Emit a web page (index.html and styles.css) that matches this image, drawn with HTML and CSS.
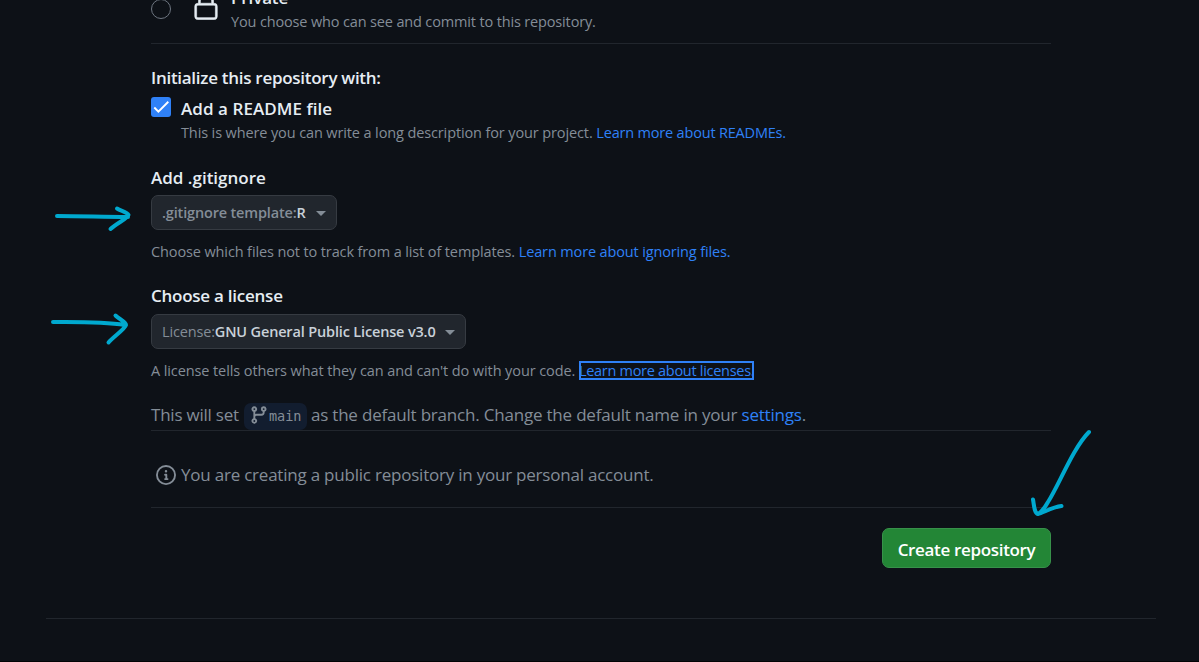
FILE: index.html
```html
<!DOCTYPE html>
<html lang="en">
<head>
<meta charset="utf-8">
<title>Create a new repository</title>
<link rel="stylesheet" href="styles.css">
</head>
<body>
<main class="page">
  <form class="form">
    <div class="visibility">
      <span class="radio"></span>
      <svg class="lock" width="30" height="30" viewBox="0 0 24 24" fill="#e6edf3" stroke="#e6edf3" stroke-width=".5"><path d="M6 9V7.250C6 3.845 8.503 1 12 1s6 2.845 6 6.250V9h.5a2.500 2.500 0 0 1 2.500 2.500v8a2.500 2.500 0 0 1-2.500 2.500h-13A2.500 2.500 0 0 1 3 19.500v-8A2.500 2.500 0 0 1 5.500 9Zm-1.500 2.500v8a1 1 0 0 0 1 1h13a1 1 0 0 0 1-1v-8a1 1 0 0 0-1-1h-13a1 1 0 0 0-1 1Zm3-4.250V9h9V7.250c0-2.670-1.922-4.750-4.500-4.750-2.578 0-4.500 2.080-4.500 4.750Z"/></svg>
      <div class="visibility-text">
        <div class="title"><span class="t-private">Private</span></div>
        <div class="note"><span class="n-private">You choose who can see and commit to this repository.</span></div>
      </div>
    </div>

    <h2 class="title init"><span class="t-init">Initialize this repository with:</span></h2>
    <div class="readme">
      <span class="checkbox"><svg width="20" height="20" viewBox="0 0 20 20" fill="none" stroke="#fff" stroke-width="1.900"><path d="M3.300 10.500 7.400 14.600 17.300 4.800"/></svg></span>
      <div>
        <div class="title"><span class="t-readme">Add a README file</span></div>
        <div class="note readme-note"><span class="n-readme">This is where you can write a long description for your project.</span> <a class="l-readme">Learn more about READMEs.</a></div>
      </div>
    </div>

    <h2 class="title section"><span class="t-ignore">Add .gitignore</span></h2>
    <div class="select select-ignore"><span class="select-label">.gitignore template:</span><span class="select-value">R</span><i class="caret"></i></div>
    <div class="note select-note"><span class="n-ignore">Choose which files not to track from a list of templates.</span> <a class="l-ignore">Learn more about ignoring files.</a></div>

    <h2 class="title section-license"><span class="t-license">Choose a license</span></h2>
    <div class="select select-license"><span class="select-plain">License:</span><span class="select-value">GNU General Public License v3.0</span><i class="caret"></i></div>
    <div class="note select-note"><span class="n-license">A license tells others what they can and can't do with your code.</span> <a class="l-license focused">Learn more about licenses.</a></div>

    <div class="branch-line">
      <span class="p-set">This will set</span>
      <span class="branch"><svg width="20" height="20" viewBox="0 0 16 16" fill="#848d97"><path d="M9.500 3.250a2.250 2.250 0 1 1 3 2.122V6A2.500 2.500 0 0 1 10 8.500H6a1 1 0 0 0-1 1v1.128a2.251 2.251 0 1 1-1.500 0V5.372a2.250 2.250 0 1 1 1.500 0v1.836A2.493 2.493 0 0 1 6 7h4a1 1 0 0 0 1-1v-.628A2.250 2.250 0 0 1 9.500 3.250Zm-6 0a.750.750 0 1 0 1.500 0 .750.750 0 0 0-1.500 0Zm8.250-.750a.750.750 0 1 0 0 1.500.750.750 0 0 0 0-1.500ZM4.250 12a.750.750 0 1 0 0 1.500.750.750 0 0 0 0-1.500Z"/></svg><code>main</code></span>
      <span class="p-default">as the default branch. Change the default name in your <a>settings</a>.</span>
    </div>
    <div class="info">
      <svg width="20" height="20" viewBox="0 0 16 16" fill="#848d97"><path d="M0 8a8 8 0 1 1 16 0A8 8 0 0 1 0 8Zm8-6.500a6.500 6.500 0 1 0 0 13 6.500 6.500 0 0 0 0-13ZM6.500 7.750A.750.750 0 0 1 7.250 7h1a.750.750 0 0 1 .750.750v2.750h.250a.750.750 0 0 1 0 1.500h-2a.750.750 0 0 1 0-1.500h.250v-2h-.250a.750.750 0 0 1-.750-.750ZM8 6a1 1 0 1 1 0-2 1 1 0 0 1 0 2Z"/></svg>
      <span class="p-info">You are creating a public repository in your personal account.</span>
    </div>
    <div class="actions"><button type="button" class="create"><span class="t-create">Create repository</span></button></div>
  </form>
  <footer class="footer"></footer>
  <svg class="marks" width="1199" height="662" viewBox="0 0 1199 662" fill="none" stroke="#00a9cf" stroke-width="4" stroke-linecap="round" stroke-linejoin="round">
    <path d="M57 216C82 216 104 217 128 217M117 208.500C121 211 127 212 128.500 215C128.500 218 117 223 110.500 229"/>
    <path d="M53 322C82 322 103 321.500 125 325M115.500 315.500C119 319 126 322 126 325C125 329 113 337 108.500 342.500"/>
    <path d="M1089 432C1073 448 1059 485 1048 502Q1043 511 1038 514M1033 499.500C1034 504 1034 513 1038 514C1043 513 1052 507 1061.500 506"/>
  </svg>
</main>
</body>
</html>
```
FILE: styles.css
```css
* { box-sizing: border-box; }
body {
  margin: 0;
  background: #0d1117;
  color: #e6edf3;
  font-family: "Open Sans", "Noto Sans", sans-serif;
}
.page {
  position: relative;
  height: 662px;
  overflow: hidden;
  border-bottom: 1px solid #020305;
}
.form { width: 900px; margin-left: 151px; }
a { color: #2f81f7; }
.title { margin: 0; font-size: 17px; line-height: 24px; font-weight: 600; white-space: nowrap; }
.note { font-size: 14.5px; line-height: 20px; color: #848d97; white-space: nowrap; }

.t-private { letter-spacing: -0.12px; }
.t-init { letter-spacing: -0.28px; }
.t-readme { letter-spacing: 0.06px; }
.t-license { letter-spacing: -0.25px; }
.t-create { letter-spacing: -0.33px; }
.n-private { letter-spacing: -0.15px; }
.n-readme { letter-spacing: -0.12px; }
.l-readme { letter-spacing: -0.19px; }
.n-ignore { letter-spacing: -0.12px; }
.l-ignore { letter-spacing: -0.14px; }
.n-license { letter-spacing: -0.1px; }
.l-license { letter-spacing: -0.29px; }
.p-set { letter-spacing: -0.22px; }
.p-default { letter-spacing: -0.2px; }
.p-info { letter-spacing: -0.22px; }

.visibility {
  display: flex;
  height: 60px;
  margin-top: -16px;
  border-bottom: 1px solid #21262d;
}
.radio { width: 20px; height: 20px; margin-top: 15px; border: 1px solid #6e7681; border-radius: 50%; }
.lock { margin: 8px 10px 0 20px; }
.visibility-text { padding-top: 2px; }
.visibility-text .note { margin-top: 2px; }

.init { margin-top: 22px; }
.readme { display: flex; gap: 10px; margin-top: 7px; }
.checkbox { width: 20px; height: 20px; border-radius: 3px; background: #2f81f7; }
.checkbox svg { display: block; }
.readme-note { margin-top: 2px; }
.section { margin-top: 23px; }
.section-license { margin-top: 22px; }

.select {
  display: flex;
  align-items: center;
  height: 35px;
  padding: 0 10px;
  border: 1px solid #363b42;
  border-radius: 7px;
  background: #21262d;
  font-size: 14.5px;
  white-space: nowrap;
}
.select-ignore { width: 186px; margin-top: 5px; }
.select-license { width: 315px; margin-top: 6px; }
.select-label { color: #848d97; font-weight: 600; letter-spacing: -0.16px; }
.select-plain { color: #848d97; letter-spacing: -0.16px; }
.select-value { color: #c9d1d9; font-weight: 600; letter-spacing: -0.16px; }
.caret {
  margin: 1px 0 0 auto;
  border: 5px solid transparent;
  border-top-color: #848d97;
  border-bottom: 0;
}
.select-note { margin-top: 12px; }
.focused { outline: 2px solid #2f81f7; outline-offset: -2px; }

.branch-line, .info {
  display: flex;
  align-items: center;
  color: #848d97;
  font-size: 17px;
  line-height: 24px;
  white-space: nowrap;
  border-bottom: 1px solid #21262d;
}
.branch-line { height: 50px; padding-top: 18px; }
.branch {
  display: flex;
  align-items: center;
  width: 63px;
  height: 27px;
  margin: 3px 4px 0 5px;
  padding-left: 5px;
  border-radius: 7px;
  background: #121d2f;
}
.branch svg { margin-top: -3px; }
code { font-family: "DejaVu Sans Mono", monospace; font-size: 13.5px; }
.info { height: 77px; padding: 12px 0 0 5px; gap: 5px; }
.actions { display: flex; justify-content: flex-end; margin-top: 20px; }
.create {
  width: 169px;
  height: 40px;
  padding: 3px 0 0;
  border: 1px solid #37914a;
  border-radius: 7px;
  background: #238636;
  color: #fff;
  font: 600 17px/24px "Open Sans", sans-serif;
  white-space: nowrap;
}
.footer { width: 1110px; margin: 50px 0 0 46px; border-top: 1px solid #21262d; }
.marks { position: absolute; left: 0; top: 0; }
```
